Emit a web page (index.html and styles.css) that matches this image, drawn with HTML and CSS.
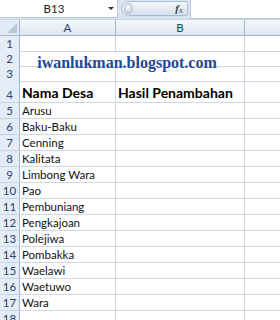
FILE: index.html
```html
<!DOCTYPE html>
<html lang="id">
<head>
    <meta charset="UTF-8">
    <title>Nama Desa</title>
    <link rel="stylesheet" href="styles.css">
</head>
<body>
    <div class="formula-bar">
        <div class="name-box">
            <span class="ref">B13</span>
            <span class="arrow"></span>
        </div>
        <div class="fx-button">
            <span class="knob"></span>
            <span class="fx"><i>f</i><sub>x</sub></span>
        </div>
        <div class="formula-input"></div>
    </div>

    <div class="sheet">
        <div class="row head">
            <div class="corner"><span class="tri"></span></div>
            <div class="col-head">A</div>
            <div class="col-head">B</div>
            <div class="col-head"></div>
        </div>
        <div class="row r-small"><div class="num">1</div><div class="cell"></div><div class="cell"></div><div class="cell"></div></div>
        <div class="row r-small">
            <div class="num">2</div>
            <div class="cell merged"><span class="blog">iwanlukman.blogspot.com</span></div>
            <div class="cell"></div>
        </div>
        <div class="row r-small"><div class="num">3</div><div class="cell"></div><div class="cell"></div><div class="cell"></div></div>
        <div class="row r-title">
            <div class="num">4</div>
            <div class="cell title">Nama Desa</div>
            <div class="cell title">Hasil Penambahan</div>
            <div class="cell"></div>
        </div>
        <div class="row"><div class="num">5</div><div class="cell">Arusu</div><div class="cell"></div><div class="cell"></div></div>
        <div class="row"><div class="num">6</div><div class="cell">Baku-Baku</div><div class="cell"></div><div class="cell"></div></div>
        <div class="row"><div class="num">7</div><div class="cell">Cenning</div><div class="cell"></div><div class="cell"></div></div>
        <div class="row"><div class="num">8</div><div class="cell">Kalitata</div><div class="cell"></div><div class="cell"></div></div>
        <div class="row"><div class="num">9</div><div class="cell">Limbong Wara</div><div class="cell"></div><div class="cell"></div></div>
        <div class="row"><div class="num">10</div><div class="cell">Pao</div><div class="cell"></div><div class="cell"></div></div>
        <div class="row"><div class="num">11</div><div class="cell">Pembuniang</div><div class="cell"></div><div class="cell"></div></div>
        <div class="row"><div class="num">12</div><div class="cell">Pengkajoan</div><div class="cell"></div><div class="cell"></div></div>
        <div class="row"><div class="num">13</div><div class="cell">Polejiwa</div><div class="cell"></div><div class="cell"></div></div>
        <div class="row"><div class="num">14</div><div class="cell">Pombakka</div><div class="cell"></div><div class="cell"></div></div>
        <div class="row"><div class="num">15</div><div class="cell">Waelawi</div><div class="cell"></div><div class="cell"></div></div>
        <div class="row"><div class="num">16</div><div class="cell">Waetuwo</div><div class="cell"></div><div class="cell"></div></div>
        <div class="row"><div class="num">17</div><div class="cell">Wara</div><div class="cell"></div><div class="cell"></div></div>
        <div class="row"><div class="num">18</div><div class="cell"></div><div class="cell"></div><div class="cell"></div></div>
    </div>
</body>
</html>
```

FILE: styles.css
```css
body {
    margin: 0;
    padding: 0;
    background: white;
    font-family: Lato, "Liberation Sans", sans-serif;
    overflow: hidden;
}

/* formula bar */
.formula-bar {
    display: flex;
    height: 20px;
    background: #dbe5f2;
    border-bottom: 1px solid #c5d3e6;
    box-sizing: border-box;
}
.name-box {
    width: 118px;
    height: 18px;
    background: white;
    border: 1px solid #b8c9df;
    border-top: none;
    border-left: none;
    box-sizing: border-box;
    display: flex;
    align-items: center;
}
.ref {
    flex: 1;
    text-align: center;
    font-size: 11.5px;
    color: #222;
}
.arrow {
    width: 0;
    height: 0;
    border-left: 3px solid transparent;
    border-right: 3px solid transparent;
    border-top: 3px solid #333;
    margin-right: 3px;
}
.fx-button {
    width: 67px;
    height: 15px;
    margin: 1px 0 0 3px;
    border: 1px solid #a9bcd6;
    border-radius: 8px 2px 2px 8px;
    background: linear-gradient(#f4f7fb, #d5e0ef);
    box-sizing: border-box;
    display: flex;
    align-items: center;
    justify-content: space-between;
}
.knob {
    width: 9px;
    height: 11px;
    margin-left: 2px;
    border-radius: 50%;
    background: radial-gradient(circle at 40% 40%, #ffffff, #c3ceda 70%);
    border: 1px solid #b5c3d3;
    box-sizing: border-box;
}
.fx {
    font-family: "Liberation Serif", serif;
    font-size: 11px;
    color: #444;
    margin-right: 4px;
    line-height: 1;
}
.fx i {
    font-weight: bold;
}
.fx sub {
    font-size: 8px;
    vertical-align: -1px;
}
.formula-input {
    flex: 1;
    height: 19px;
    background: white;
    border-left: 1px solid #b8c9df;
    border-bottom: 1px solid #b8c9df;
    margin-left: 2px;
    box-sizing: border-box;
}

/* grid */
.row {
    display: grid;
    grid-template-columns: 20px 96px 129px 60px;
    height: 16px;
}
.row.r-small {
    height: 15px;
}
.row.r-title {
    height: 22px;
}
.corner {
    background: #e2eaf5;
    border-right: 1px solid #9eb6ce;
    border-bottom: 1px solid #9eb6ce;
    position: relative;
}
.tri {
    position: absolute;
    right: 2px;
    bottom: 2px;
    width: 0;
    height: 0;
    border-left: 10px solid transparent;
    border-bottom: 10px solid #b8c6d8;
}
.col-head {
    background: linear-gradient(#f5f8fc, #dde6f1);
    border-right: 1px solid #9eb6ce;
    border-bottom: 1px solid #9eb6ce;
    text-align: center;
    font-size: 11.5px;
    line-height: 15px;
    color: #27405f;
}
.num {
    background: #e4ecf7;
    border-right: 1px solid #9eb6ce;
    border-bottom: 1px solid #c5d3e4;
    font-size: 11.5px;
    color: #2c4466;
    display: flex;
    align-items: flex-end;
    justify-content: center;
    line-height: 15px;
}
.cell {
    border-right: 1px solid #d0d7e5;
    border-bottom: 1px solid #d0d7e5;
    font-size: 11.5px;
    color: #111;
    padding-left: 2px;
    display: flex;
    align-items: flex-end;
    line-height: 15px;
    white-space: nowrap;
}
.merged {
    grid-column: 2 / 4;
    justify-content: center;
    padding-right: 12px;
}
.blog {
    font-family: "Liberation Serif", serif;
    font-weight: bold;
    font-size: 16px;
    color: #1f4a94;
    line-height: 14px;
    position: relative;
    top: 4px;
}
.title {
    font-weight: bold;
    font-size: 14px;
    line-height: 19px;
    color: #000;
}
```
